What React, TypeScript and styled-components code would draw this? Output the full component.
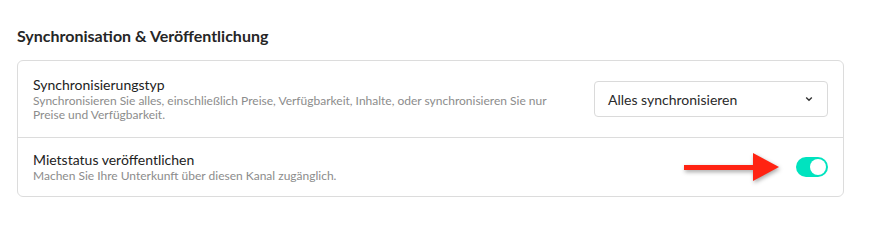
import React from "react";
import styled, { createGlobalStyle } from "styled-components";

const GlobalStyle = createGlobalStyle`
  body {
    margin: 0;
    background: #ffffff;
    font-family: "Lato", "Open Sans", sans-serif;
    color: #222222;
  }
`;

const Page = styled.div`
  padding: 26px 29px 0 17px;
`;

const Title = styled.h2`
  margin: 0 0 14px 0;
  font-size: 16px;
  line-height: 20px;
  font-weight: 700;
  color: #262626;
`;

const Card = styled.div`
  border: 1px solid #dcdcdc;
  border-radius: 6px;
`;

const Row = styled.div<{ $pad: number; $divider?: boolean }>`
  position: relative;
  display: flex;
  align-items: center;
  justify-content: space-between;
  gap: 24px;
  padding: ${(p) => p.$pad}px 15px;
  border-top: ${(p) => (p.$divider ? "1px solid #dcdcdc" : "none")};
`;

const TextBlock = styled.div`
  display: flex;
  flex-direction: column;
  max-width: 540px;
`;

const Label = styled.div`
  font-size: 14px;
  line-height: 18px;
  color: #222222;
`;

const Hint = styled.div`
  font-size: 12px;
  line-height: 14px;
  color: #8c8c8c;
`;

const Select = styled.div`
  flex: 0 0 auto;
  box-sizing: border-box;
  width: 234px;
  height: 36px;
  display: flex;
  align-items: center;
  justify-content: space-between;
  padding: 0 14px 0 13px;
  border: 1px solid #dadada;
  border-radius: 4px;
  font-size: 14px;
  color: #2a2a2a;
`;

const Toggle = styled.div<{ $on: boolean }>`
  flex: 0 0 auto;
  position: relative;
  width: 32px;
  height: 20px;
  border-radius: 10px;
  background: ${(p) => (p.$on ? "#00e3bf" : "#cccccc")};
`;

const Knob = styled.span<{ $on: boolean }>`
  position: absolute;
  top: 2px;
  left: ${(p) => (p.$on ? "14px" : "2px")};
  width: 16px;
  height: 16px;
  border-radius: 50%;
  background: #ffffff;
`;

const Arrow = styled.svg`
  position: absolute;
  left: 664px;
  top: 14px;
  filter: drop-shadow(1px 2px 2px rgba(0, 0, 0, 0.35));
`;

const Chevron = () => (
  <svg width="8" height="6" viewBox="0 0 8 6">
    <path d="M1.2 1.5 L4 4.3 L6.8 1.5" fill="none" stroke="#333" strokeWidth="1.4" />
  </svg>
);

export default function App() {
  return (
    <>
      <GlobalStyle />
      <Page>
        <Title>Synchronisation &amp; Veröffentlichung</Title>
        <Card>
          <Row $pad={15}>
            <TextBlock>
              <Label>Synchronisierungstyp</Label>
              <Hint>
                Synchronisieren Sie alles, einschließlich Preise, Verfügbarkeit, Inhalte, oder
                synchronisieren Sie nur Preise und Verfügbarkeit.
              </Hint>
            </TextBlock>
            <Select>
              <span>Alles synchronisieren</span>
              <Chevron />
            </Select>
          </Row>
          <Row $pad={13} $divider>
            <TextBlock>
              <Label>Mietstatus veröffentlichen</Label>
              <Hint>Machen Sie Ihre Unterkunft über diesen Kanal zugänglich.</Hint>
            </TextBlock>
            <Toggle $on>
              <Knob $on />
            </Toggle>
            <Arrow width="100" height="32" viewBox="0 0 100 32">
              <rect x="2" y="13" width="72" height="5" fill="#ff2312" />
              <polygon points="71,1 97,15 71,29" fill="#ff2312" />
            </Arrow>
          </Row>
        </Card>
      </Page>
    </>
  );
}
